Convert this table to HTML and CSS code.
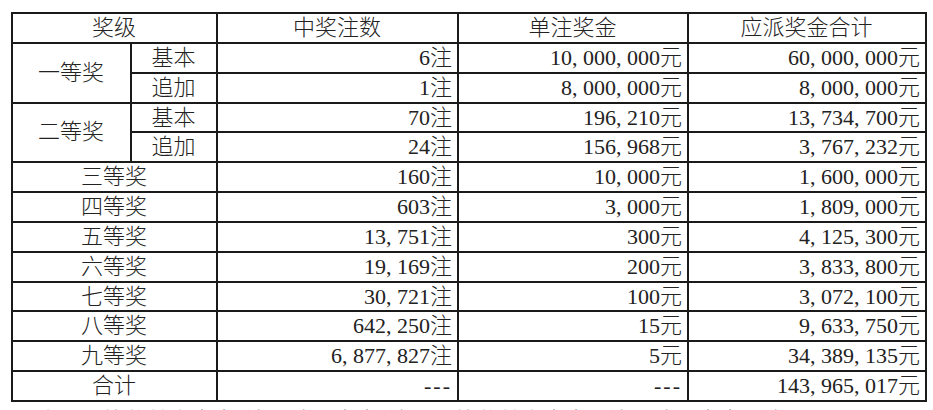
FILE: index.html
```html
<!DOCTYPE html>
<html lang="zh-CN">
<head>
<meta charset="utf-8">
<title>开奖结果</title>
<link rel="stylesheet" href="styles.css">
</head>
<body>
<table class="prize">
  <colgroup>
    <col class="c-sub1"><col class="c-sub2"><col class="c-count"><col class="c-single"><col class="c-total">
  </colgroup>
  <thead>
    <tr><th colspan="2">奖级</th><th>中奖注数</th><th>单注奖金</th><th>应派奖金合计</th></tr>
  </thead>
  <tbody>
    <tr><td class="lv" rowspan="2">一等奖</td><td class="lv">基本</td><td class="num">6注</td><td class="num">10, 000, 000元</td><td class="num">60, 000, 000元</td></tr>
    <tr><td class="lv">追加</td><td class="num">1注</td><td class="num">8, 000, 000元</td><td class="num">8, 000, 000元</td></tr>
    <tr><td class="lv" rowspan="2">二等奖</td><td class="lv">基本</td><td class="num">70注</td><td class="num">196, 210元</td><td class="num">13, 734, 700元</td></tr>
    <tr><td class="lv">追加</td><td class="num">24注</td><td class="num">156, 968元</td><td class="num">3, 767, 232元</td></tr>
    <tr><td class="lv" colspan="2">三等奖</td><td class="num">160注</td><td class="num">10, 000元</td><td class="num">1, 600, 000元</td></tr>
    <tr><td class="lv" colspan="2">四等奖</td><td class="num">603注</td><td class="num">3, 000元</td><td class="num">1, 809, 000元</td></tr>
    <tr><td class="lv" colspan="2">五等奖</td><td class="num">13, 751注</td><td class="num">300元</td><td class="num">4, 125, 300元</td></tr>
    <tr><td class="lv" colspan="2">六等奖</td><td class="num">19, 169注</td><td class="num">200元</td><td class="num">3, 833, 800元</td></tr>
    <tr><td class="lv" colspan="2">七等奖</td><td class="num">30, 721注</td><td class="num">100元</td><td class="num">3, 072, 100元</td></tr>
    <tr><td class="lv" colspan="2">八等奖</td><td class="num">642, 250注</td><td class="num">15元</td><td class="num">9, 633, 750元</td></tr>
    <tr><td class="lv" colspan="2">九等奖</td><td class="num">6, 877, 827注</td><td class="num">5元</td><td class="num">34, 389, 135元</td></tr>
    <tr><td class="lv" colspan="2">合计</td><td class="num dash">---</td><td class="num dash">---</td><td class="num">143, 965, 017元</td></tr>
  </tbody>
</table>
<p class="note">本期一等奖基本中出6注，追加中出1注；二等奖基本中出70注，追加中出24注。</p>
</body>
</html>
```

FILE: styles.css
```css
html, body {
  margin: 0;
  padding: 0;
  background: #ffffff;
}

body {
  font-family: "Liberation Serif", "Noto Sans CJK SC", serif;
  font-size: 22px;
  font-weight: 300;
  color: #222222;
  overflow: hidden;
}

.prize {
  border-collapse: collapse;
  table-layout: fixed;
  width: 914px;
  margin: 12px 0 0 11px;
}

.c-sub1 { width: 119px; }
.c-sub2 { width: 86px; }
.c-count { width: 241px; }
.c-single { width: 230px; }
.c-total { width: 238px; }

.prize th,
.prize td {
  border: 2px solid #1a1a1a;
  height: 27.85px;
  padding: 0 5px 0 4px;
  line-height: 27.85px;
  font-weight: 300;
  white-space: nowrap;
  overflow: hidden;
}

.prize th {
  text-align: center;
}

.prize .lv {
  text-align: center;
}

.prize .num {
  text-align: right;
}

.prize .dash {
  letter-spacing: 2px;
}

.note {
  margin: 4px 0 0;
  padding-left: 37px;
  line-height: 30px;
  white-space: nowrap;
}
```
